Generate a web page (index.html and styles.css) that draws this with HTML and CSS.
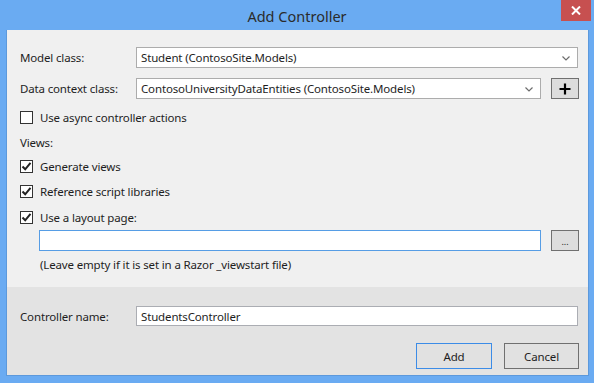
FILE: index.html
```html
<!DOCTYPE html>
<html lang="en">
<head>
    <meta charset="UTF-8">
    <meta name="viewport" content="width=device-width, initial-scale=1.0">
    <title>Add Controller</title>
    <link rel="stylesheet" href="styles.css">
</head>
<body>
    <div class="window">
        <div class="titlebar">
            <span class="title">Add Controller</span>
            <button class="close-btn" aria-label="Close">
                <svg width="10" height="9" viewBox="0 0 10 9">
                    <path d="M1 0.5 L9 8.5 M9 0.5 L1 8.5" stroke="#fff" stroke-width="2"/>
                </svg>
            </button>
        </div>

        <div class="client">
            <div class="upper">
                <div class="row field-row first">
                    <label class="label">Model class:</label>
                    <div class="select wide">
                        <span>Student (ContosoSite.Models)</span>
                        <svg class="chevron" width="8" height="5" viewBox="0 0 8 5">
                            <path d="M0.5 0.5 L4 4 L7.5 0.5" fill="none" stroke="#6d6d6d" stroke-width="1.2"/>
                        </svg>
                    </div>
                </div>

                <div class="row field-row second">
                    <label class="label">Data context class:</label>
                    <div class="select">
                        <span>ContosoUniversityDataEntities (ContosoSite.Models)</span>
                        <svg class="chevron" width="8" height="5" viewBox="0 0 8 5">
                            <path d="M0.5 0.5 L4 4 L7.5 0.5" fill="none" stroke="#6d6d6d" stroke-width="1.2"/>
                        </svg>
                    </div>
                    <button class="small-btn">
                        <svg width="12" height="12" viewBox="0 0 12 12">
                            <path d="M6 0.5 V11.5 M0.5 6 H11.5" stroke="#000" stroke-width="2.2"/>
                        </svg>
                    </button>
                </div>

                <div class="row check-row async">
                    <span class="checkbox"></span>
                    <span>Use async controller actions</span>
                </div>

                <div class="row text-row views">Views:</div>

                <div class="row check-row gen">
                    <span class="checkbox checked">
                        <svg width="11" height="11" viewBox="0 0 11 11">
                            <path d="M1.5 5.5 L4.2 8.3 L9.5 1.8" fill="none" stroke="#222" stroke-width="2"/>
                        </svg>
                    </span>
                    <span>Generate views</span>
                </div>

                <div class="row check-row ref">
                    <span class="checkbox checked">
                        <svg width="11" height="11" viewBox="0 0 11 11">
                            <path d="M1.5 5.5 L4.2 8.3 L9.5 1.8" fill="none" stroke="#222" stroke-width="2"/>
                        </svg>
                    </span>
                    <span>Reference script libraries</span>
                </div>

                <div class="row check-row layout">
                    <span class="checkbox checked">
                        <svg width="11" height="11" viewBox="0 0 11 11">
                            <path d="M1.5 5.5 L4.2 8.3 L9.5 1.8" fill="none" stroke="#222" stroke-width="2"/>
                        </svg>
                    </span>
                    <span>Use a layout page:</span>
                </div>

                <div class="row layout-input-row">
                    <input type="text" class="textbox focused">
                    <button class="small-btn dots">...</button>
                </div>

                <div class="row text-row hint">(Leave empty if it is set in a Razor _viewstart file)</div>
            </div>

            <div class="lower">
                <div class="row name-row">
                    <label class="label">Controller name:</label>
                    <input type="text" class="textbox" value="StudentsController">
                </div>
                <div class="actions">
                    <button class="btn default">Add</button>
                    <button class="btn">Cancel</button>
                </div>
            </div>
        </div>
    </div>
</body>
</html>
```

FILE: styles.css
```css
* {
    box-sizing: border-box;
}

body {
    margin: 0;
    background-color: #6aabf2;
    font-family: 'Segoe UI', 'Noto Sans', sans-serif;
    font-size: 11.5px;
    letter-spacing: -0.15px;
    color: #1e1e1e;
}

.window {
    width: 594px;
    height: 383px;
    position: relative;
}

.titlebar {
    height: 30px;
    display: flex;
    align-items: center;
    justify-content: center;
}

.title {
    font-size: 14.5px;
    color: #2b2b2b;
    margin-top: 1px;
    letter-spacing: 0;
}

.close-btn {
    position: absolute;
    top: 0;
    right: 3px;
    width: 30px;
    height: 21px;
    border: none;
    padding: 0;
    background-color: #c75050;
    display: flex;
    align-items: center;
    justify-content: center;
}

.client {
    margin: 0 5px 0 6px;
    height: 346px;
    border: 1px solid #5c99dc;
    border-top: none;
    display: flex;
    flex-direction: column;
}

.upper {
    background-color: #f0f0f0;
    padding: 17px 10px 0 13px;
    height: 257px;
}

.lower {
    background-color: #e3e3e3;
    flex: 1;
    padding: 19px 10px 0 13px;
}

.row {
    display: flex;
    align-items: center;
}

.label {
    width: 116px;
    flex-shrink: 0;
}

.field-row {
    height: 21px;
}

.second {
    margin-top: 10px;
}

.select {
    flex: 1;
    height: 21px;
    background-color: #fff;
    border: 1px solid #acacac;
    display: flex;
    align-items: center;
    justify-content: space-between;
    padding: 0 7px 0 4px;
}

.chevron {
    margin-top: 1px;
}

.small-btn {
    width: 28px;
    height: 21px;
    margin-left: 10px;
    margin-right: -1px;
    flex-shrink: 0;
    background-color: #dddddd;
    border: 1px solid #707070;
    padding: 0;
    display: flex;
    align-items: center;
    justify-content: center;
    font-family: inherit;
}

.dots {
    font-size: 9px;
    color: #1e1e1e;
    padding-top: 2px;
    height: 21px;
}

.check-row {
    height: 16px;
}

.checkbox {
    width: 13px;
    height: 13px;
    border: 1px solid #333;
    background-color: #fff;
    margin-right: 7px;
    display: flex;
    align-items: center;
    justify-content: center;
}

.async {
    margin-top: 10px;
}

.text-row {
    height: 16px;
}

.views {
    margin-top: 9px;
}

.gen {
    margin-top: 8px;
}

.ref {
    margin-top: 9px;
}

.layout {
    margin-top: 10px;
}

.layout-input-row {
    margin-top: 5px;
    padding-left: 19px;
    height: 21px;
}

.textbox {
    flex: 1;
    height: 21px;
    border: 1px solid #abadb3;
    background-color: #fff;
    font-family: inherit;
    font-size: 11.5px;
    letter-spacing: -0.15px;
    color: #1e1e1e;
    padding: 0 4px;
    margin: 0;
    outline: none;
}

.textbox.focused {
    border-color: #569de5;
}

.hint {
    margin-top: 5px;
    padding-left: 20px;
}

.name-row {
    height: 20px;
}

.name-row .textbox {
    height: 20px;
}

.actions {
    margin-top: 17px;
    display: flex;
    justify-content: flex-end;
    gap: 12px;
    margin-right: -1px;
}

.btn {
    width: 75px;
    height: 26px;
    background-color: #e1e1e1;
    border: 1px solid #707070;
    font-family: inherit;
    font-size: 11.5px;
    letter-spacing: -0.15px;
    color: #1e1e1e;
    padding: 0;
}

.btn.default {
    border-color: #3c8ce7;
    width: 76px;
}
```
